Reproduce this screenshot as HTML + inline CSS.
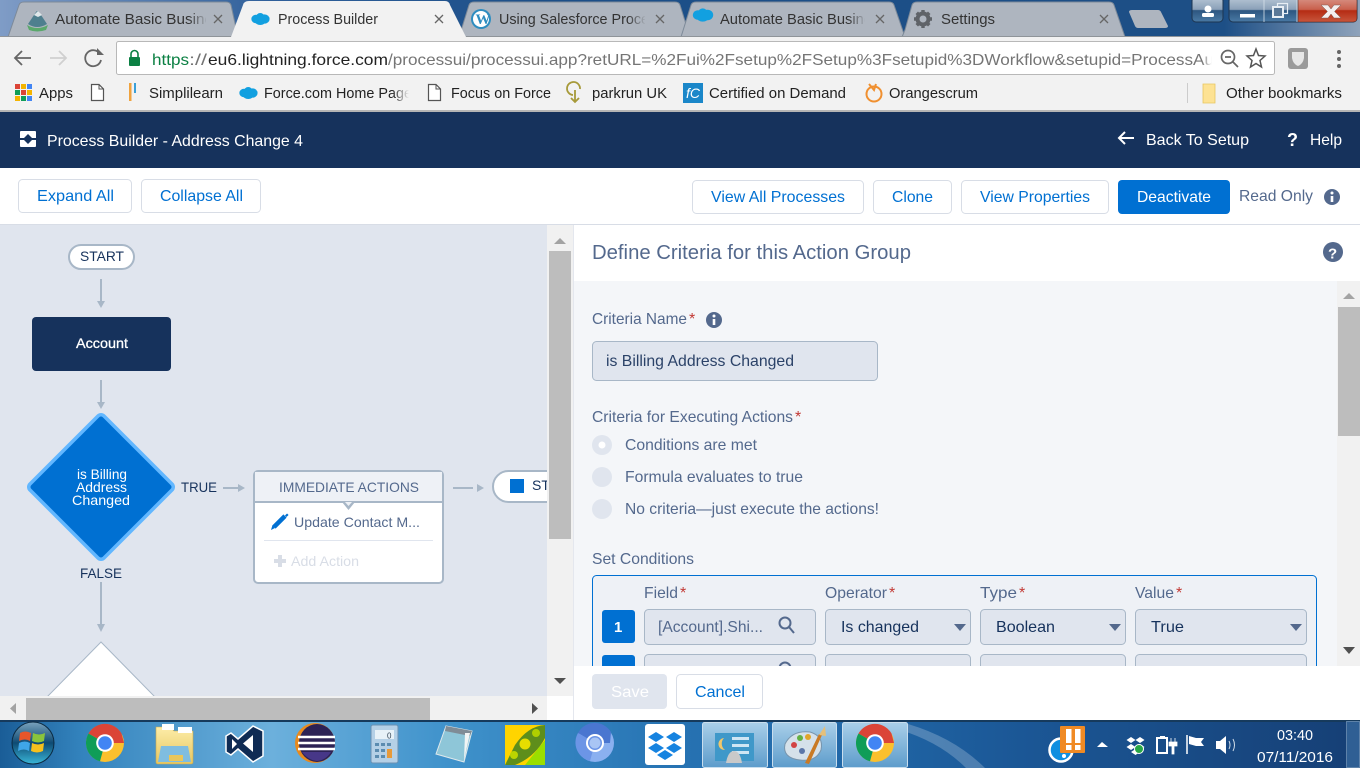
<!DOCTYPE html>
<html><head><meta charset="utf-8"><title>Process Builder</title>
<style>
html,body{margin:0;padding:0;width:1360px;height:768px;overflow:hidden;background:#fff}
svg{display:block}
text{font-family:"Liberation Sans",sans-serif;font-size:16px;white-space:pre}
.tab{font-size:15px;fill:#333}
.bm{font-size:14.5px;fill:#222}
.wh{fill:#fff}
.bl{fill:#0070d2}
.lb{fill:#54698d}
.dk{fill:#16325c}
.rd{fill:#c23934}
</style></head><body>
<svg width="1360" height="768" viewBox="0 0 1360 768" xmlns="http://www.w3.org/2000/svg">
<defs>
<linearGradient id="title" x1="0" x2="1" y1="0" y2="0"><stop offset="0" stop-color="#7f9cc6"/><stop offset=".2" stop-color="#2f5f9a"/><stop offset=".4" stop-color="#1c4f88"/><stop offset=".9" stop-color="#1d4f86"/><stop offset="1" stop-color="#8fa3bb"/></linearGradient>
<linearGradient id="task" x1="0" x2="1" y1="0" y2="0"><stop offset="0" stop-color="#1a5d97"/><stop offset=".06" stop-color="#3383bd"/><stop offset=".2" stop-color="#6cb0dc"/><stop offset=".33" stop-color="#3f92cb"/><stop offset=".5" stop-color="#2672b2"/><stop offset=".62" stop-color="#2168a8"/><stop offset=".75" stop-color="#1b5796"/><stop offset="1" stop-color="#163f75"/></linearGradient>
<linearGradient id="fade1" x1="0" x2="1" y1="0" y2="0"><stop offset="0" stop-color="#aeb5bf" stop-opacity="0"/><stop offset="1" stop-color="#aeb5bf"/></linearGradient>
<linearGradient id="fade2" x1="0" x2="1" y1="0" y2="0"><stop offset="0" stop-color="#f2f2f2" stop-opacity="0"/><stop offset="1" stop-color="#f2f2f2"/></linearGradient>
<linearGradient id="fade3" x1="0" x2="1" y1="0" y2="0"><stop offset="0" stop-color="#fff" stop-opacity="0"/><stop offset="1" stop-color="#fff"/></linearGradient>
<linearGradient id="btnh" x1="0" x2="0" y1="0" y2="1"><stop offset="0" stop-color="#b8c7d6"/><stop offset=".5" stop-color="#8aa0b8"/><stop offset=".54" stop-color="#2d5680"/><stop offset="1" stop-color="#4a7aa5"/></linearGradient>
<linearGradient id="close" x1="0" x2="0" y1="0" y2="1"><stop offset="0" stop-color="#d9968a"/><stop offset=".5" stop-color="#c9604c"/><stop offset=".55" stop-color="#b52c14"/><stop offset="1" stop-color="#c8563c"/></linearGradient>
<linearGradient id="box" x1="0" x2="0" y1="0" y2="1"><stop offset="0" stop-color="#a9cfe9"/><stop offset="1" stop-color="#5d9ccb"/></linearGradient>
<linearGradient id="orb" x1="0" x2="0" y1="0" y2="1"><stop offset="0" stop-color="#7aa3bd"/><stop offset=".5" stop-color="#0e4a73"/><stop offset="1" stop-color="#39b6d8"/></linearGradient>
<linearGradient id="folder" x1="0" x2="0" y1="0" y2="1"><stop offset="0" stop-color="#fdeda9"/><stop offset="1" stop-color="#e6c65f"/></linearGradient>
<g id="chrome">
<circle r="19" fill="#fbc02d"/>
<path d="M0 0 L-16.5 -9.5 A19 19 0 0 1 16.5 -9.5 L19 0 Z" fill="#db4437"/>
<path d="M-16.5 -9.5 A19 19 0 0 0 -5 18.3 L0 0 Z" fill="#0f9d58"/>
<circle r="8.8" fill="#fff"/><circle r="6.8" fill="#4285f4"/>
</g>
<g id="cloud"><ellipse cx="0" cy="0" rx="5.5" ry="5"/><ellipse cx="5" cy="-2" rx="5" ry="5"/><ellipse cx="10" cy="0" rx="6" ry="5.500"/><ellipse cx="5" cy="3" rx="6" ry="4"/></g>
<g id="page"><path d="M0.5 0.5H8L12.5 5V16.5H0.5Z" fill="#fff" stroke="#555" stroke-width="1.2"/><path d="M8 .5V5H12.5" fill="none" stroke="#555"/></g>
<clipPath id="canvas"><rect x="0" y="225" width="547" height="471"/></clipPath>
<clipPath id="cond"><rect x="575" y="281" width="762" height="385"/></clipPath>
<clipPath id="urlc"><rect x="150" y="40" width="1062" height="36"/></clipPath>
</defs>

<!-- Title bar -->
<rect width="1360" height="37" fill="url(#title)"/>
<path d="M8 37 L19 5 Q20 2 24 2 H226 Q230 2 231 5 L238 37Z" fill="#aeb5bf" stroke="#7d8a99"/>
<path d="M459 37 L469 5 Q470 2 474 2 H675 Q679 2 680 5 L690 37Z" fill="#aeb5bf" stroke="#7d8a99"/>
<path d="M681 37 L691 5 Q692 2 696 2 H889 Q893 2 894 5 L905 37Z" fill="#aeb5bf" stroke="#7d8a99"/>
<path d="M902 37 L905 30 L912 5 Q913 2 917 2 H1109 Q1113 2 1114 5 L1125 37Z" fill="#aeb5bf" stroke="#7d8a99"/>
<path d="M1129 12 Q1129 10 1132 10 H1158 Q1160 10 1161 12 L1168 26 Q1168 28 1165 28 H1138 Q1136 28 1135 26 Z" fill="#aeb5bf"/>
<path d="M231 37 L243 5 Q244 1 249 1 H445 Q449 1 450 5 L466 37Z" fill="#f2f2f2"/>

<g transform="translate(27,9)"><path d="M1 15 L9 3 Q10 1 12 3 L20 15 Q10 21 1 15Z" fill="#4e7f8e"/><path d="M0 16 Q10 22 21 16 L19 21 Q10 24 2 21Z" fill="#5aa86b"/><path d="M7 6 L11 2 L15 6 L11 8Z" fill="#dfe7ea"/></g>
<text class="tab" x="55" y="24" textLength="158" lengthAdjust="spacingAndGlyphs">Automate Basic Busine</text>
<rect x="188" y="8" width="20" height="24" fill="url(#fade1)"/>
<rect x="206" y="8" width="8" height="24" fill="#aeb5bf"/>
<use href="#cloud" transform="translate(256,19) scale(.85)" fill="#12a0e0"/>
<text class="tab" x="278" y="24" textLength="100" lengthAdjust="spacingAndGlyphs">Process Builder</text>
<circle cx="481" cy="19" r="10" fill="#2e8dc0"/><circle cx="481" cy="19" r="8" fill="#fff"/><text x="475.500" y="24" style="font-family:'Liberation Serif',serif;font-size:15px;font-weight:bold;fill:#2e8dc0">W</text>
<text class="tab" x="499" y="24" textLength="150" lengthAdjust="spacingAndGlyphs">Using Salesforce Proce</text>
<rect x="628" y="8" width="18" height="24" fill="url(#fade1)"/>
<rect x="645" y="8" width="8" height="24" fill="#aeb5bf"/>
<use href="#cloud" transform="translate(698,15) scale(.95)" fill="#12a0e0"/>
<text class="tab" x="720" y="24" textLength="152" lengthAdjust="spacingAndGlyphs">Automate Basic Busine</text>
<rect x="848" y="8" width="18" height="24" fill="url(#fade1)"/>
<rect x="865" y="8" width="8" height="24" fill="#aeb5bf"/>
<g transform="translate(923,19)" fill="#5f6368"><circle r="5.500" fill="none" stroke="#5f6368" stroke-width="4"/><path d="M-1.700 -9H1.700V-5H-1.700Z M-1.700 9H1.700V5H-1.700Z M-9 -1.700V1.700H-5V-1.700Z M9 -1.700V1.700H5V-1.700Z M-7.500 -5L-5 -7.500L-2.500 -5L-5 -2.500Z M7.500 -5L5 -7.500L2.500 -5L5 -2.500Z M-7.500 5L-5 7.500L-2.500 5L-5 2.500Z M7.500 5L5 7.500L2.500 5L5 2.500Z"/></g>
<text class="tab" x="941" y="24" textLength="54" lengthAdjust="spacingAndGlyphs">Settings</text>
<g stroke="#666" stroke-width="1.300" fill="none">
<path d="M214 15l8 8M222 15l-8 8"/><path d="M435 15l8 8M443 15l-8 8"/><path d="M656 15l8 8M664 15l-8 8"/><path d="M876 15l8 8M884 15l-8 8"/><path d="M1100 15l8 8M1108 15l-8 8"/>
</g>
<!-- Window buttons -->
<rect x="1192" y="-3" width="31" height="25" rx="4" fill="url(#btnh)" stroke="#1d3550"/>
<circle cx="1208" cy="9" r="3.500" fill="#fff"/><rect x="1202" y="13" width="12" height="4" rx="1.500" fill="#fff"/>
<rect x="1229" y="-3" width="128" height="25" rx="4" fill="url(#btnh)" stroke="#1d3550"/>
<path d="M1298 -3H1353Q1357 -3 1357 1V18Q1357 22 1353 22H1298Z" fill="url(#close)" stroke="#4a2a28" stroke-width=".6"/>
<path d="M1264 0V22M1297 0V22" stroke="#d7e1ea" stroke-width=".8"/>
<rect x="1240" y="14" width="15" height="3.500" fill="#fff"/>
<rect x="1277.500" y="3.500" width="10" height="10" fill="none" stroke="#e8eef4" stroke-width="1.200"/><rect x="1273" y="7" width="10" height="10" fill="#5a7897" stroke="#e8eef4" stroke-width="2"/>
<path d="M1321 5H1328L1331 9L1334 5H1341L1334.500 11.500L1341 18H1334L1331 14L1328 18H1321L1327.500 11.500Z" fill="#f4eeee" stroke="#7d5b55" stroke-width=".5"/>

<!-- Toolbar -->
<rect y="37" width="1360" height="73" fill="#f2f2f2"/>
<path d="M0 36.500H231M466 36.500H1360" stroke="#8f9499"/>
<rect x="116.500" y="41.500" width="1158" height="33" rx="2" fill="#fff" stroke="#b8b8b8"/>
<g fill="none" stroke="#666" stroke-width="1.800">
<path d="M31 58H15M22 51L15 58L22 65"/>
<path d="M50 58H66M59 51L66 58L59 65" stroke="#d0d0d0"/>
<path d="M100 54A8 8 0 1 0 101 60"/>
</g>
<path d="M97 48V55H104Z" fill="#666"/>
<rect x="129" y="57" width="11" height="9" rx="1" fill="#0b8043"/><path d="M131 57V54A3.500 3.500 0 0 1 138 54V57" fill="none" stroke="#0b8043" stroke-width="1.600"/>
<g clip-path="url(#urlc)">
<text x="152" y="65" textLength="37" lengthAdjust="spacingAndGlyphs" fill="#0b8043">https</text>
<text x="189" y="65" textLength="18" lengthAdjust="spacingAndGlyphs" fill="#757575">://</text>
<text x="208" y="65" textLength="180" lengthAdjust="spacingAndGlyphs" fill="#222">eu6.lightning.force.com</text>
<text x="388" y="65" textLength="826" lengthAdjust="spacingAndGlyphs" fill="#757575">/processui/processui.app?retURL=%2Fui%2Fsetup%2FSetup%3Fsetupid%3DWorkflow&amp;setupid=ProcessAu</text>
</g>
<rect x="1202" y="45" width="10" height="26" fill="url(#fade3)"/>
<g fill="none" stroke="#666" stroke-width="1.700"><circle cx="1228" cy="57" r="6.500"/><path d="M1233 62L1238 67M1225 57H1231"/></g>
<path d="M1256 49L1258.500 55.500L1265 56L1260 60.500L1261.500 67L1256 63.500L1250.500 67L1252 60.500L1247 56L1253.500 55.500Z" fill="none" stroke="#555" stroke-width="1.500"/>
<rect x="1288" y="48" width="20" height="21" rx="3" fill="#9a9a9a"/><path d="M1292 52H1304V58Q1303 64 1298 66Q1293 64 1292 58Z" fill="#e6e6e6"/>
<g fill="#666"><circle cx="1339" cy="52" r="2"/><circle cx="1339" cy="59" r="2"/><circle cx="1339" cy="66" r="2"/></g>

<!-- Bookmarks -->
<g>
<rect x="15" y="84" width="5" height="5" fill="#db4437"/><rect x="21" y="84" width="5" height="5" fill="#f4b400"/><rect x="27" y="84" width="5" height="5" fill="#4285f4"/>
<rect x="15" y="90" width="5" height="5" fill="#0f9d58"/><rect x="21" y="90" width="5" height="5" fill="#db4437"/><rect x="27" y="90" width="5" height="5" fill="#f4b400"/>
<rect x="15" y="96" width="5" height="5" fill="#f4b400"/><rect x="21" y="96" width="5" height="5" fill="#0f9d58"/><rect x="27" y="96" width="5" height="5" fill="#4285f4"/>
</g>
<text class="bm" x="39" y="98" textLength="34" lengthAdjust="spacingAndGlyphs">Apps</text>
<use href="#page" x="91" y="84"/>
<rect x="129" y="83" width="2.500" height="18" fill="#f0a33e"/><rect x="134" y="83" width="2" height="10" fill="#3aa0d8"/>
<text class="bm" x="149" y="98" textLength="74" lengthAdjust="spacingAndGlyphs">Simplilearn</text>
<use href="#cloud" transform="translate(244,93) scale(.85)" fill="#12a0e0"/>
<text class="bm" x="264" y="98" textLength="148" lengthAdjust="spacingAndGlyphs">Force.com Home Page</text>
<rect x="392" y="84" width="17" height="20" fill="url(#fade2)"/><rect x="409" y="84" width="6" height="20" fill="#f2f2f2"/>
<use href="#page" x="428" y="84"/>
<text class="bm" x="451" y="98" textLength="100" lengthAdjust="spacingAndGlyphs">Focus on Force</text>
<path d="M573 95A6.500 6.500 0 1 1 580 89M575 90V102M571 98L575 102L579 98" fill="none" stroke="#a79a3a" stroke-width="1.800"/>
<text class="bm" x="592" y="98" textLength="75" lengthAdjust="spacingAndGlyphs">parkrun UK</text>
<rect x="683" y="83" width="20" height="20" fill="#1b87c9"/><text x="686" y="98" style="font-size:14px;font-style:italic;fill:#fff">fC</text>
<text class="bm" x="709" y="98" textLength="137" lengthAdjust="spacingAndGlyphs">Certified on Demand</text>
<circle cx="874" cy="94" r="7.500" fill="none" stroke="#f09030" stroke-width="2"/><path d="M869 84L874 90L876 84" fill="none" stroke="#f09030" stroke-width="2"/>
<text class="bm" x="889" y="98" textLength="89" lengthAdjust="spacingAndGlyphs">Orangescrum</text>
<rect x="1187" y="83" width="1" height="20" fill="#ccc"/>
<path d="M1203 84H1215V103H1203Z" fill="#fde293" stroke="#e8c660" stroke-width=".8"/>
<text class="bm" x="1226" y="98" textLength="116" lengthAdjust="spacingAndGlyphs">Other bookmarks</text>
<rect y="110" width="1360" height="2" fill="#b5b5b5"/>

<!-- App header -->
<rect y="112" width="1360" height="56" fill="#16325c"/>
<rect x="20" y="131" width="16" height="16" rx="1" fill="#fff"/><path d="M28 134L33 139L28 144L23 139Z" fill="#16325c"/><rect x="20" y="138" width="5" height="2" fill="#16325c"/><rect x="31" y="138" width="5" height="2" fill="#16325c"/>
<text class="wh" x="47" y="146" textLength="256" lengthAdjust="spacingAndGlyphs">Process Builder - Address Change 4</text>
<path d="M1134 138H1119M1125 132L1119 138L1125 144" fill="none" stroke="#fff" stroke-width="2"/>
<text class="wh" x="1146" y="145" textLength="103" lengthAdjust="spacingAndGlyphs">Back To Setup</text>
<text class="wh" x="1287" y="146" style="font-weight:bold;font-size:18px">?</text>
<text class="wh" x="1310" y="145" textLength="32" lengthAdjust="spacingAndGlyphs">Help</text>

<!-- Action bar -->
<rect y="168" width="1360" height="56" fill="#fff"/>
<rect y="224" width="1360" height="1" fill="#d8dde6"/>
<g fill="#fff" stroke="#d8dde6">
<rect x="18.500" y="179.500" width="113" height="33" rx="4"/><rect x="141.500" y="179.500" width="119" height="33" rx="4"/>
<rect x="692.500" y="180.500" width="171" height="33" rx="4"/><rect x="873.500" y="180.500" width="78" height="33" rx="4"/><rect x="961.500" y="180.500" width="147" height="33" rx="4"/>
</g>
<rect x="1118" y="180" width="112" height="34" rx="4" fill="#0070d2"/>
<text class="bl" x="37" y="201" textLength="77" lengthAdjust="spacingAndGlyphs">Expand All</text>
<text class="bl" x="160" y="201" textLength="83" lengthAdjust="spacingAndGlyphs">Collapse All</text>
<text class="bl" x="711" y="202" textLength="134" lengthAdjust="spacingAndGlyphs">View All Processes</text>
<text class="bl" x="892" y="202" textLength="41" lengthAdjust="spacingAndGlyphs">Clone</text>
<text class="bl" x="980" y="202" textLength="110" lengthAdjust="spacingAndGlyphs">View Properties</text>
<text class="wh" x="1137" y="202" textLength="74" lengthAdjust="spacingAndGlyphs">Deactivate</text>
<text class="lb" x="1239" y="201" textLength="74" lengthAdjust="spacingAndGlyphs">Read Only</text>
<circle cx="1332" cy="197" r="8" fill="#54698d"/><rect x="1330.700" y="196" width="2.600" height="6" fill="#fff"/><circle cx="1332" cy="193" r="1.500" fill="#fff"/>

<!-- Canvas -->
<rect y="225" width="547" height="471" fill="#e0e5ee"/>
<g clip-path="url(#canvas)">
<rect x="69" y="245" width="65" height="24" rx="12" fill="#fff" stroke="#a8b7c7" stroke-width="2"/>
<text class="dk" x="80" y="261" textLength="44" lengthAdjust="spacingAndGlyphs" style="font-size:14px">START</text>
<g stroke="#a8b7c7" stroke-width="2" fill="none">
<path d="M101 279V302M101 380V403M101 582V625M223 488H238M453 488H473"/>
</g>
<g fill="#a8b7c7">
<path d="M97 301H105L101 308Z"/><path d="M97 402H105L101 409Z"/><path d="M97 624H105L101 632Z"/><path d="M238 484V492L245 488Z"/><path d="M477 484V492L484 488Z"/>
</g>
<rect x="32" y="317" width="139" height="54" rx="4" fill="#16325c"/>
<text class="wh" x="76" y="348" textLength="52" lengthAdjust="spacingAndGlyphs" style="font-size:14px;stroke:#fff;stroke-width:.3">Account</text>
<path d="M101 419L169 487L101 555L33 487Z" fill="#0070d2" stroke="#62b7ff" stroke-width="12" stroke-linejoin="round"/>
<path d="M101 419L169 487L101 555L33 487Z" fill="#0070d2" stroke="#0070d2" stroke-width="5" stroke-linejoin="round"/>
<text class="wh" x="77" y="479" textLength="50" lengthAdjust="spacingAndGlyphs" style="font-size:14px">is Billing</text>
<text class="wh" x="76" y="492" textLength="51" lengthAdjust="spacingAndGlyphs" style="font-size:14px">Address</text>
<text class="wh" x="72" y="505" textLength="58" lengthAdjust="spacingAndGlyphs" style="font-size:14px">Changed</text>
<text class="dk" x="181" y="492" textLength="36" lengthAdjust="spacingAndGlyphs" style="font-size:14px">TRUE</text>
<text class="dk" x="80" y="578" textLength="42" lengthAdjust="spacingAndGlyphs" style="font-size:14px">FALSE</text>
<rect x="254" y="471" width="189" height="112" rx="4" fill="#fff" stroke="#a8b7c7" stroke-width="2"/>
<path d="M255 472H442V502H255Z" fill="#eef1f6"/>
<rect x="255" y="501" width="187" height="2" fill="#a8b7c7"/>
<path d="M342 502H355L348.500 510Z" fill="#a8b7c7"/><path d="M345 502H352L348.500 506Z" fill="#eef1f6"/>
<text class="lb" x="279" y="492" textLength="140" lengthAdjust="spacingAndGlyphs" style="font-size:14px">IMMEDIATE ACTIONS</text>
<path d="M271 530L272.500 525L275 528Z" fill="#0070d2"/><path d="M274 527L285 516" stroke="#0070d2" stroke-width="4.500" fill="none"/><path d="M286 514.500L287.500 516" stroke="#0070d2" stroke-width="3" fill="none"/>
<text class="lb" x="294" y="527" textLength="126" lengthAdjust="spacingAndGlyphs" style="font-size:14px">Update Contact M...</text>
<rect x="264" y="540" width="169" height="1" fill="#e0e5ee"/>
<path d="M278 555H282V559H286V563H282V567H278V563H274V559H278Z" fill="#d8dde6"/>
<text x="291" y="566" textLength="68" lengthAdjust="spacingAndGlyphs" fill="#d8dde6" style="font-size:14px">Add Action</text>
<rect x="493" y="471" width="90" height="31" rx="15.500" fill="#fff" stroke="#a8b7c7" stroke-width="2"/>
<rect x="510" y="479" width="14" height="14" fill="#0070d2"/>
<text class="dk" x="532" y="490" style="font-size:14px">STOP</text>
<path d="M101 642L155 697H47Z" fill="#fff" stroke="#a8b7c7"/>
</g>

<!-- Left scrollbars -->
<rect x="547" y="225" width="26" height="495" fill="#fff"/>
<rect x="547" y="225" width="26" height="471" fill="#f1f1f1"/>
<rect x="549" y="251" width="22" height="288" fill="#bdbdbd"/>
<path d="M554 244L560 238L566 244Z" fill="#a3a3a3"/><path d="M554 678H566L560 684Z" fill="#505050"/>
<rect y="696" width="547" height="24" fill="#f1f1f1"/>
<rect x="26" y="698" width="404" height="22" fill="#bdbdbd"/>
<path d="M16 703V714L10 708.500Z" fill="#a3a3a3"/><path d="M532 703V714L538 708.500Z" fill="#505050"/>
<rect x="573" y="225" width="1" height="495" fill="#e4e7ee"/>

<!-- Right panel -->
<rect x="574" y="225" width="786" height="56" fill="#fff"/>
<text x="592" y="259" textLength="319" lengthAdjust="spacingAndGlyphs" fill="#54698d" style="font-size:20px">Define Criteria for this Action Group</text>
<circle cx="1333" cy="252" r="10" fill="#54698d"/><text x="1328" y="258.500" class="wh" style="font-size:15px;font-weight:bold">?</text>
<rect x="574" y="281" width="786" height="385" fill="#f4f6f9"/>
<rect x="1337" y="281" width="23" height="385" fill="#f1f1f1"/>
<rect x="1338" y="307" width="22" height="129" fill="#bdbdbd"/>
<path d="M1343 299L1349 293L1355 299Z" fill="#a3a3a3"/><path d="M1343 647H1355L1349 654Z" fill="#505050"/>

<g clip-path="url(#cond)">
<text class="lb" x="592" y="324" textLength="95" lengthAdjust="spacingAndGlyphs">Criteria Name</text><text class="rd" x="689" y="324">*</text>
<circle cx="714" cy="320" r="8" fill="#54698d"/><rect x="712.700" y="319" width="2.600" height="6" fill="#fff"/><circle cx="714" cy="316" r="1.500" fill="#fff"/>
<rect x="592.500" y="341.500" width="285" height="39" rx="4" fill="#e0e5ee" stroke="#a8b7c7"/>
<text class="dk" x="606" y="366" textLength="188" lengthAdjust="spacingAndGlyphs" style="fill:#2b4268">is Billing Address Changed</text>
<text class="lb" x="592" y="422" textLength="201" lengthAdjust="spacingAndGlyphs">Criteria for Executing Actions</text><text class="rd" x="795" y="422">*</text>
<circle cx="602" cy="445" r="10" fill="#e0e5ee"/><circle cx="602" cy="445" r="3.500" fill="#fff"/>
<circle cx="602" cy="477" r="10" fill="#e0e5ee"/><circle cx="602" cy="509" r="10" fill="#e0e5ee"/>
<text class="lb" x="625" y="450" textLength="132" lengthAdjust="spacingAndGlyphs">Conditions are met</text>
<text class="lb" x="625" y="482" textLength="178" lengthAdjust="spacingAndGlyphs">Formula evaluates to true</text>
<text class="lb" x="625" y="514" textLength="254" lengthAdjust="spacingAndGlyphs">No criteria—just execute the actions!</text>
<text class="lb" x="592" y="564" textLength="102" lengthAdjust="spacingAndGlyphs">Set Conditions</text>
<rect x="592.500" y="575.500" width="724" height="140" rx="4" fill="#eef1f6" stroke="#0070d2"/>
<text class="lb" x="644" y="598" textLength="34" lengthAdjust="spacingAndGlyphs">Field</text><text class="rd" x="680" y="598">*</text>
<text class="lb" x="825" y="598" textLength="62" lengthAdjust="spacingAndGlyphs">Operator</text><text class="rd" x="889" y="598">*</text>
<text class="lb" x="980" y="598" textLength="37" lengthAdjust="spacingAndGlyphs">Type</text><text class="rd" x="1019" y="598">*</text>
<text class="lb" x="1135" y="598" textLength="39" lengthAdjust="spacingAndGlyphs">Value</text><text class="rd" x="1176" y="598">*</text>
<rect x="602" y="610" width="33" height="33" rx="3" fill="#0070d2"/>
<rect x="602" y="655" width="33" height="33" rx="3" fill="#0070d2"/>
<text class="wh" x="614" y="632" style="font-weight:bold;font-size:15px">1</text>
<g fill="#e0e5ee" stroke="#a8b7c7">
<rect x="644.500" y="609.500" width="171" height="35" rx="4"/><rect x="825.500" y="609.500" width="145" height="35" rx="4"/><rect x="980.500" y="609.500" width="145" height="35" rx="4"/><rect x="1135.500" y="609.500" width="171" height="35" rx="4"/>
<rect x="644.500" y="654.500" width="171" height="35" rx="4"/><rect x="825.500" y="654.500" width="145" height="35" rx="4"/><rect x="980.500" y="654.500" width="145" height="35" rx="4"/><rect x="1135.500" y="654.500" width="171" height="35" rx="4"/>
</g>
<text class="lb" x="658" y="632" textLength="105" lengthAdjust="spacingAndGlyphs">[Account].Shi...</text>
<g fill="none" stroke="#54698d" stroke-width="2"><circle cx="785" cy="623" r="5.500"/><path d="M789 627L794 633"/><circle cx="785" cy="668" r="5.500"/></g>
<text class="dk" x="841" y="632" textLength="78" lengthAdjust="spacingAndGlyphs">Is changed</text>
<text class="dk" x="996" y="632" textLength="59" lengthAdjust="spacingAndGlyphs">Boolean</text>
<text class="dk" x="1151" y="632" textLength="33" lengthAdjust="spacingAndGlyphs">True</text>
<g fill="#54698d"><path d="M954 624H966L960 631Z"/><path d="M1109 624H1121L1115 631Z"/><path d="M1290 624H1302L1296 631Z"/></g>
</g>

<!-- Footer -->
<rect x="574" y="666" width="786" height="54" fill="#fff"/>
<rect x="592" y="674" width="75" height="35" rx="4" fill="#e0e5ee"/>
<text class="wh" x="611" y="697" textLength="38" lengthAdjust="spacingAndGlyphs">Save</text>
<rect x="676.500" y="674.500" width="86" height="34" rx="4" fill="#fff" stroke="#d8dde6"/>
<text class="bl" x="695" y="697" textLength="50" lengthAdjust="spacingAndGlyphs">Cancel</text>

<!-- Taskbar -->
<rect y="720" width="1360" height="48" fill="url(#task)"/>
<rect y="720" width="1360" height="2" fill="#163a5c"/>
<path d="M908 724Q955 738 985 768H966Q940 742 900 730Z" fill="#fff" opacity=".22"/>
<circle cx="33" cy="743" r="21" fill="url(#orb)" stroke="#0b2a42"/>
<g transform="translate(33,742)"><path d="M-13 -9Q-8 -12 -2 -9L-3 -1Q-8 -4 -14 -1Z" fill="#e8562a"/><path d="M0 -9Q6 -6 12 -9L11 -1Q5 2 -1 -1Z" fill="#8ac43c"/><path d="M-14 1Q-8 -2 -3 1L-4 9Q-9 6 -15 9Z" fill="#3fa5e8"/><path d="M-1 1Q5 4 11 1L10 9Q4 12 -2 9Z" fill="#f6c01d"/></g>
<use href="#chrome" x="105" y="743"/>
<path d="M156 727H170L174 731H193V762Q193 764 191 764H158Q156 764 156 762Z" fill="url(#folder)" stroke="#c9a94e" stroke-width=".6"/>
<rect x="162" y="724" width="12" height="6" fill="#fff"/><rect x="178" y="727" width="14" height="6" fill="#fff"/>
<path d="M161 746H188L191 762H158Z" fill="#7fbde0"/><rect x="169" y="755" width="14" height="6" fill="#e9c65a"/>
<path d="M253 726L263 731V756L253 762L238 749L231 755L226 752V736L231 733L238 739Z" fill="#0f2b54" stroke="#fff" stroke-width="1.500"/>
<path d="M253 735V752L243 743.500Z" fill="#fff"/><path d="M232 739V749L237 744Z" fill="#fff"/>
<circle cx="315" cy="743" r="20" fill="#e88a1e"/><ellipse cx="317" cy="743" rx="18" ry="19" fill="#2c2255"/>
<path d="M298 737H335M298 743H335M298 749H335" stroke="#fff" stroke-width="2.600"/><path d="M302 752H331Q326 760 317 761Q308 760 302 752Z" fill="#473788"/>
<rect x="371" y="725" width="27" height="38" rx="2" fill="#b5d0e6" stroke="#6a91b3"/><rect x="375" y="730" width="19" height="9" fill="#e8f2f8"/>
<text x="387" y="738.500" style="font-size:8px;fill:#345">0</text>
<g fill="#5c8cb0"><rect x="375" y="743" width="4" height="3"/><rect x="381" y="743" width="4" height="3"/><rect x="387" y="743" width="4" height="3"/><rect x="375" y="749" width="4" height="3"/><rect x="381" y="749" width="4" height="3"/><rect x="375" y="755" width="4" height="3"/><rect x="381" y="755" width="4" height="3"/><rect x="387" y="749" width="5" height="9" fill="#e89a3a"/></g>
<path d="M446 726L472 731L464 762L436 754Z" fill="#8ec6d8" stroke="#dfe9ec"/><path d="M446 726L472 731L470 736L445 731Z" fill="#7f8c96"/>
<path d="M465 733L470 733L464 760Z" fill="#f1f4f4"/>
<rect x="505" y="725" width="40" height="40" fill="#ffd400"/><path d="M505 765H545V740L525 765Z" fill="#9adf00"/><path d="M505 765L515 745Q528 726 545 725V738Q535 757 515 765Z" fill="#5e8e1b"/>
<circle cx="514" cy="755" r="4" fill="#bcd400"/><circle cx="525" cy="744" r="5.500" fill="#e6de00"/><circle cx="536" cy="733" r="4" fill="#b0cf00"/>
<circle cx="595" cy="743" r="19" fill="#8ab0f0"/><path d="M595 743L578 733A19 19 0 0 1 611 732L610 743Z" fill="#4a76d0"/><path d="M578 733A19 19 0 0 0 590 761L595 743Z" fill="#6c95e6"/><circle cx="595" cy="743" r="9" fill="#fff"/><circle cx="595" cy="743" r="7" fill="#6c95e6"/><circle cx="595" cy="743" r="5.500" fill="#a9c5f4"/>
<rect x="645" y="724" width="40" height="41" rx="3" fill="#fff"/>
<g fill="#1683e0"><path d="M656 732L664 737L656 742L648 737Z"/><path d="M674 732L682 737L674 742L666 737Z"/><path d="M656 743L664 748L656 753L648 748Z"/><path d="M674 743L682 748L674 753L666 748Z"/><path d="M665 750L673 755L665 760L657 755Z"/></g>
<g fill="url(#box)" stroke="#c9deee"><rect x="702.500" y="722.500" width="65" height="45" rx="2"/><rect x="772.500" y="722.500" width="64" height="45" rx="2"/><rect x="842.500" y="722.500" width="65" height="45" rx="2"/></g>
<rect x="715" y="733" width="39" height="28" fill="#3f98c9"/><path d="M724 738A6 6 0 1 0 725 750A8 8 0 0 1 724 738Z" fill="#f1c76a"/>
<g fill="#cfe6f4"><rect x="732" y="737" width="17" height="3"/><rect x="732" y="744" width="17" height="3"/><rect x="732" y="751" width="17" height="3"/></g>
<path d="M726 763Q728 751 734 751Q740 751 742 763Z" fill="#c9c9c9"/>
<path d="M785 744Q792 730 810 732Q824 736 821 750Q816 762 800 760Q782 758 785 744Z" fill="#d5e1ea" stroke="#7895ad"/>
<circle cx="794" cy="745" r="3" fill="#d24444"/><circle cx="800" cy="738" r="3" fill="#63b043"/><circle cx="808" cy="737" r="3" fill="#e0a52a"/><circle cx="802" cy="751" r="3" fill="#5b76a8"/>
<path d="M805 763L819 734L822 735L809 764Z" fill="#c97a25"/><path d="M819 735L825 726L826 736Z" fill="#e5c07a"/>
<use href="#chrome" x="875" y="743"/>

<!-- Tray -->
<circle cx="1061" cy="750" r="11.500" fill="#0f8fe0" stroke="#fff" stroke-width="2.500"/><circle cx="1064" cy="756" r="2" fill="#fff"/>
<rect x="1060" y="726" width="25" height="27" rx="1" fill="#f08a24"/>
<rect x="1066" y="729" width="5.500" height="14" fill="#fff"/><rect x="1066" y="745" width="5.500" height="5" fill="#fff"/><rect x="1075" y="729" width="5.500" height="14" fill="#fff"/><rect x="1075" y="745" width="5.500" height="5" fill="#fff"/>
<path d="M1097 747L1102 742L1108 747Z" fill="#fff"/>
<g fill="#fff"><path d="M1131 737L1135.500 740L1131 743L1126.500 740Z M1140 737L1144.500 740L1140 743L1135.500 740Z M1131 744L1135.500 747L1131 750L1126.500 747Z M1140 744L1144.500 747L1140 750L1135.500 747Z M1135.500 749L1140 752L1135.500 755L1131 752Z"/></g>
<circle cx="1139" cy="749" r="4.500" fill="#28a745" stroke="#fff"/>
<rect x="1157" y="738" width="10" height="15" fill="none" stroke="#fff" stroke-width="2"/><rect x="1160" y="736" width="5" height="2" fill="#fff"/>
<path d="M1171 738V742M1175 738V742M1169 742H1177V746H1174V754H1172V746H1169Z" stroke="#fff" fill="#fff" stroke-width=".8"/>
<path d="M1187 735V754" stroke="#fff" stroke-width="1.500"/><path d="M1189 736L1196 738L1204 738L1201 742L1204 746L1196 746L1189 744Z" fill="#fff"/>
<path d="M1216 741H1220L1226 736V754L1220 749H1216Z" fill="#fff"/><path d="M1229 741Q1231 745 1229 749M1233 739Q1236 745 1233 751" fill="none" stroke="#cfdce8"/>
<text class="wh" x="1277" y="740" textLength="36" lengthAdjust="spacingAndGlyphs" style="font-size:14.500px">03:40</text>
<text class="wh" x="1257" y="762" textLength="76" lengthAdjust="spacingAndGlyphs" style="font-size:14.500px">07/11/2016</text>
<rect x="1346.500" y="721.500" width="13" height="46" fill="#2f5f94" stroke="#6e90b4" stroke-width=".8"/>
</svg>
</body></html>
